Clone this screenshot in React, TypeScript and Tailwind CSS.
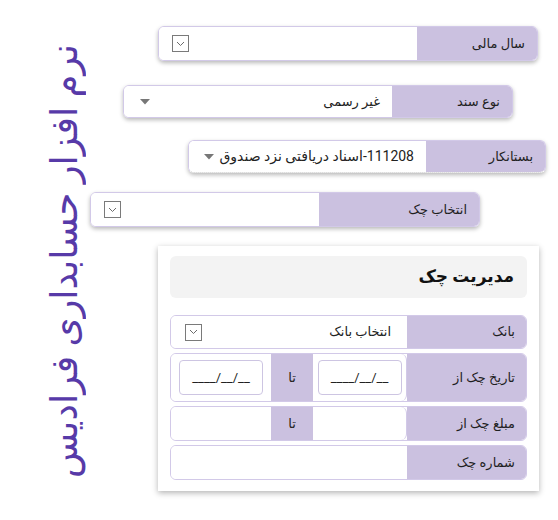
import type { ReactNode } from "react";

const font = "font-['Roboto','DejaVu_Sans',sans-serif]";

function ChevronBox() {
  return (
    <span className="flex h-[17px] w-[17px] items-center justify-center border border-[#7a7a7a] bg-white">
      <svg width="9" height="6" viewBox="0 0 9 6" fill="none">
        <path d="M1 1l3.5 3.5L8 1" stroke="#6b6b6b" strokeWidth="1" />
      </svg>
    </span>
  );
}

function Caret() {
  return (
    <svg width="10" height="6" viewBox="0 0 10 6">
      <path d="M0 0h10L5 5.5z" fill="#777" />
    </svg>
  );
}

function Row({
  label,
  labelWidth,
  height,
  className,
  children,
}: {
  label: string;
  labelWidth: string;
  height: string;
  className?: string;
  children: ReactNode;
}) {
  return (
    <div
      className={`flex overflow-hidden rounded-[6px] border border-[#d2c9e8] shadow-[0_2px_4px_rgba(0,0,0,0.28)] ${height} ${className ?? ""}`}
    >
      <div className="flex min-w-0 flex-1 items-center bg-white">{children}</div>
      <div
        className={`flex items-center justify-end bg-[#cbc1e0] pr-[12px] text-[13px] text-[#1f1f1f] ${labelWidth}`}
      >
        {label}
      </div>
    </div>
  );
}

function DateBox() {
  return (
    <div className="flex h-[35px] w-[84px] items-center justify-center rounded-[4px] border border-[#cdc5e2] bg-white text-[13px] text-[#222]">
      ____/__/__
    </div>
  );
}

function CardRow({
  label,
  height,
  children,
}: {
  label: string;
  height: string;
  children: ReactNode;
}) {
  return (
    <div className={`flex overflow-hidden rounded-[6px] border border-[#d2c9e8] ${height}`}>
      <div className="flex min-w-0 flex-1">{children}</div>
      <div className="flex w-[119px] items-center justify-end bg-[#cbc1e0] pr-[11px] text-[13px] text-[#1f1f1f]">
        {label}
      </div>
    </div>
  );
}

export default function App() {
  return (
    <div className={`flex h-[520px] w-[558px] bg-white ${font}`}>
      <div className="w-[90px] pl-[46px] pt-[44px]">
        <div className="rotate-180 whitespace-nowrap text-[37px] font-medium leading-[38px] text-[#573aa8] [writing-mode:vertical-rl]">
          نرم افزار حسابداری فرادیس
        </div>
      </div>

      <div className="flex flex-col pt-[26px]">
        <Row label="سال مالی" labelWidth="w-[120px]" height="h-[35px]" className="ml-[68px] w-[380px]">
          <span className="ml-[13px]">
            <ChevronBox />
          </span>
        </Row>

        <Row label="نوع سند" labelWidth="w-[120px]" height="h-[33px]" className="ml-[33px] mt-[24px] w-[390px]">
          <div className="flex w-full items-center justify-between pl-[16px] pr-[12px]">
            <Caret />
            <span className="text-[13px] text-[#222]">غیر رسمی</span>
          </div>
        </Row>

        <Row
          label="بستانکار"
          labelWidth="w-[119px]"
          height="h-[33px]"
          className="ml-[98px] mt-[22px] w-[358px] border-b-[#c9c9c9] [border-bottom-style:dotted]"
        >
          <div className="flex w-full items-center justify-between pl-[15px] pr-[12px]">
            <Caret />
            <span dir="rtl" className="whitespace-nowrap text-[14px] text-[#222]">
              111208-اسناد دریافتی نزد صندوق
            </span>
          </div>
        </Row>

        <Row label="انتخاب چک" labelWidth="w-[160px]" height="h-[35px]" className="mt-[19px] w-[390px]">
          <span className="ml-[13px]">
            <ChevronBox />
          </span>
        </Row>

        <div className="ml-[68px] mt-[19px] w-[381px] bg-white px-[12px] pb-[11px] pt-[10px] shadow-[0_2px_6px_rgba(0,0,0,0.3)]">
          <div className="flex h-[42px] items-center justify-end rounded-[6px] bg-[#f3f3f3] pr-[13px] text-[17px] font-bold text-[#111]">
            مدیریت چک
          </div>

          <div className="mt-[17px] flex flex-col gap-[4px]">
            <CardRow label="بانک" height="h-[34px]">
              <div className="flex w-full items-center justify-between bg-white pl-[14px] pr-[16px]">
                <ChevronBox />
                <span className="text-[13px] text-[#222]">انتخاب بانک</span>
              </div>
            </CardRow>

            <CardRow label="تاریخ چک از" height="h-[49px]">
              <div className="flex w-[100px] items-center justify-center bg-white">
                <DateBox />
              </div>
              <div className="flex w-[42px] items-center justify-center bg-[#cbc1e0] text-[13px] text-[#222]">تا</div>
              <div className="flex flex-1 items-center justify-center rounded-r-[6px] border-r border-[#d2c9e8] bg-white">
                <DateBox />
              </div>
            </CardRow>

            <CardRow label="مبلغ چک از" height="h-[35px]">
              <div className="w-[100px] bg-white" />
              <div className="flex w-[42px] items-center justify-center bg-[#cbc1e0] text-[13px] text-[#222]">تا</div>
              <div className="flex-1 rounded-r-[6px] border-r border-[#d2c9e8] bg-white" />
            </CardRow>

            <CardRow label="شماره چک" height="h-[35px]">
              <div className="flex-1 bg-white" />
            </CardRow>
          </div>
        </div>
      </div>
    </div>
  );
}
